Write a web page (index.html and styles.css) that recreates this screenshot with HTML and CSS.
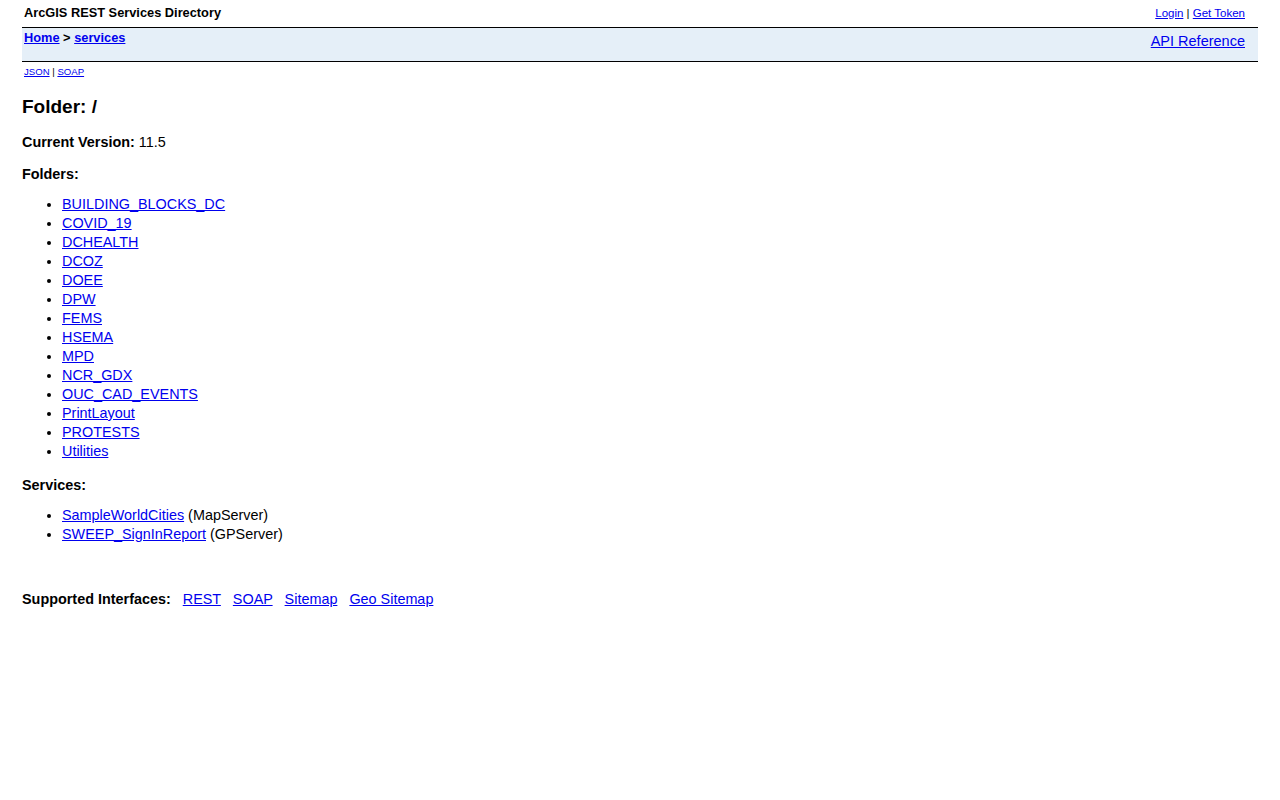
FILE: index.html
```html
<!DOCTYPE html>
<html lang="en">
<head>
    <meta charset="UTF-8">
    <title>Folder: /</title>
    <link rel="stylesheet" href="styles.css">
</head>
<body>
    <div class="top-bar">
        <div class="app-title">ArcGIS REST Services Directory</div>
        <div class="auth-links"><a href="#">Login</a> | <a href="#">Get Token</a></div>
    </div>

    <div class="nav-bar">
        <div class="breadcrumbs"><a href="#">Home</a> &gt; <a href="#">services</a></div>
        <div class="api-ref"><a href="#">API Reference</a></div>
    </div>

    <div class="formats"><a href="#">JSON</a> | <a href="#">SOAP</a></div>

    <div class="content">
        <h2>Folder: /</h2>

        <p class="version"><b>Current Version:</b> 11.5</p>

        <p class="section-title">Folders:</p>
        <ul class="item-list">
            <li><a href="#">BUILDING_BLOCKS_DC</a></li>
            <li><a href="#">COVID_19</a></li>
            <li><a href="#">DCHEALTH</a></li>
            <li><a href="#">DCOZ</a></li>
            <li><a href="#">DOEE</a></li>
            <li><a href="#">DPW</a></li>
            <li><a href="#">FEMS</a></li>
            <li><a href="#">HSEMA</a></li>
            <li><a href="#">MPD</a></li>
            <li><a href="#">NCR_GDX</a></li>
            <li><a href="#">OUC_CAD_EVENTS</a></li>
            <li><a href="#">PrintLayout</a></li>
            <li><a href="#">PROTESTS</a></li>
            <li><a href="#">Utilities</a></li>
        </ul>

        <p class="section-title">Services:</p>
        <ul class="item-list">
            <li><a href="#">SampleWorldCities</a> (MapServer)</li>
            <li><a href="#">SWEEP_SignInReport</a> (GPServer)</li>
        </ul>

        <p class="interfaces">
            <b>Supported Interfaces:</b>
            <a href="#">REST</a>
            <a href="#">SOAP</a>
            <a href="#">Sitemap</a>
            <a href="#">Geo Sitemap</a>
        </p>
    </div>
</body>
</html>
```

FILE: styles.css
```css
* {
    box-sizing: border-box;
}

body {
    margin: 0;
    padding: 0 22px;
    font-family: "Liberation Sans", Arial, sans-serif;
    font-size: 14.4px;
    color: #000;
    background: #fff;
}

a {
    color: #0000ee;
}

.top-bar {
    display: flex;
    justify-content: space-between;
    align-items: center;
    height: 28px;
    padding: 0 13px 3px 2px;
    border-bottom: 1px solid #000;
}

.app-title {
    font-size: 12.8px;
    font-weight: bold;
}

.auth-links {
    font-size: 11.5px;
    padding-top: 1px;
}

.nav-bar {
    display: flex;
    justify-content: space-between;
    align-items: flex-start;
    height: 34px;
    padding: 2px 13px 0 2px;
    background: #e5eff8;
    border-bottom: 1px solid #000;
}

.breadcrumbs {
    font-size: 12.8px;
    font-weight: bold;
}

.api-ref {
    font-size: 14.5px;
    padding-top: 3px;
}

.formats {
    font-size: 9.6px;
    padding: 4px 2px 0;
}

.content h2 {
    font-size: 19px;
    margin: 19px 0 0;
}

.version {
    margin: 16px 0 0;
}

.section-title {
    font-weight: bold;
    margin: 16px 0 0;
}

.item-list {
    margin: 13px 0 0;
    padding-left: 40px;
    line-height: 19px;
}

.interfaces {
    margin: 47px 0 0;
}

.interfaces a {
    margin-left: 8px;
}
```
